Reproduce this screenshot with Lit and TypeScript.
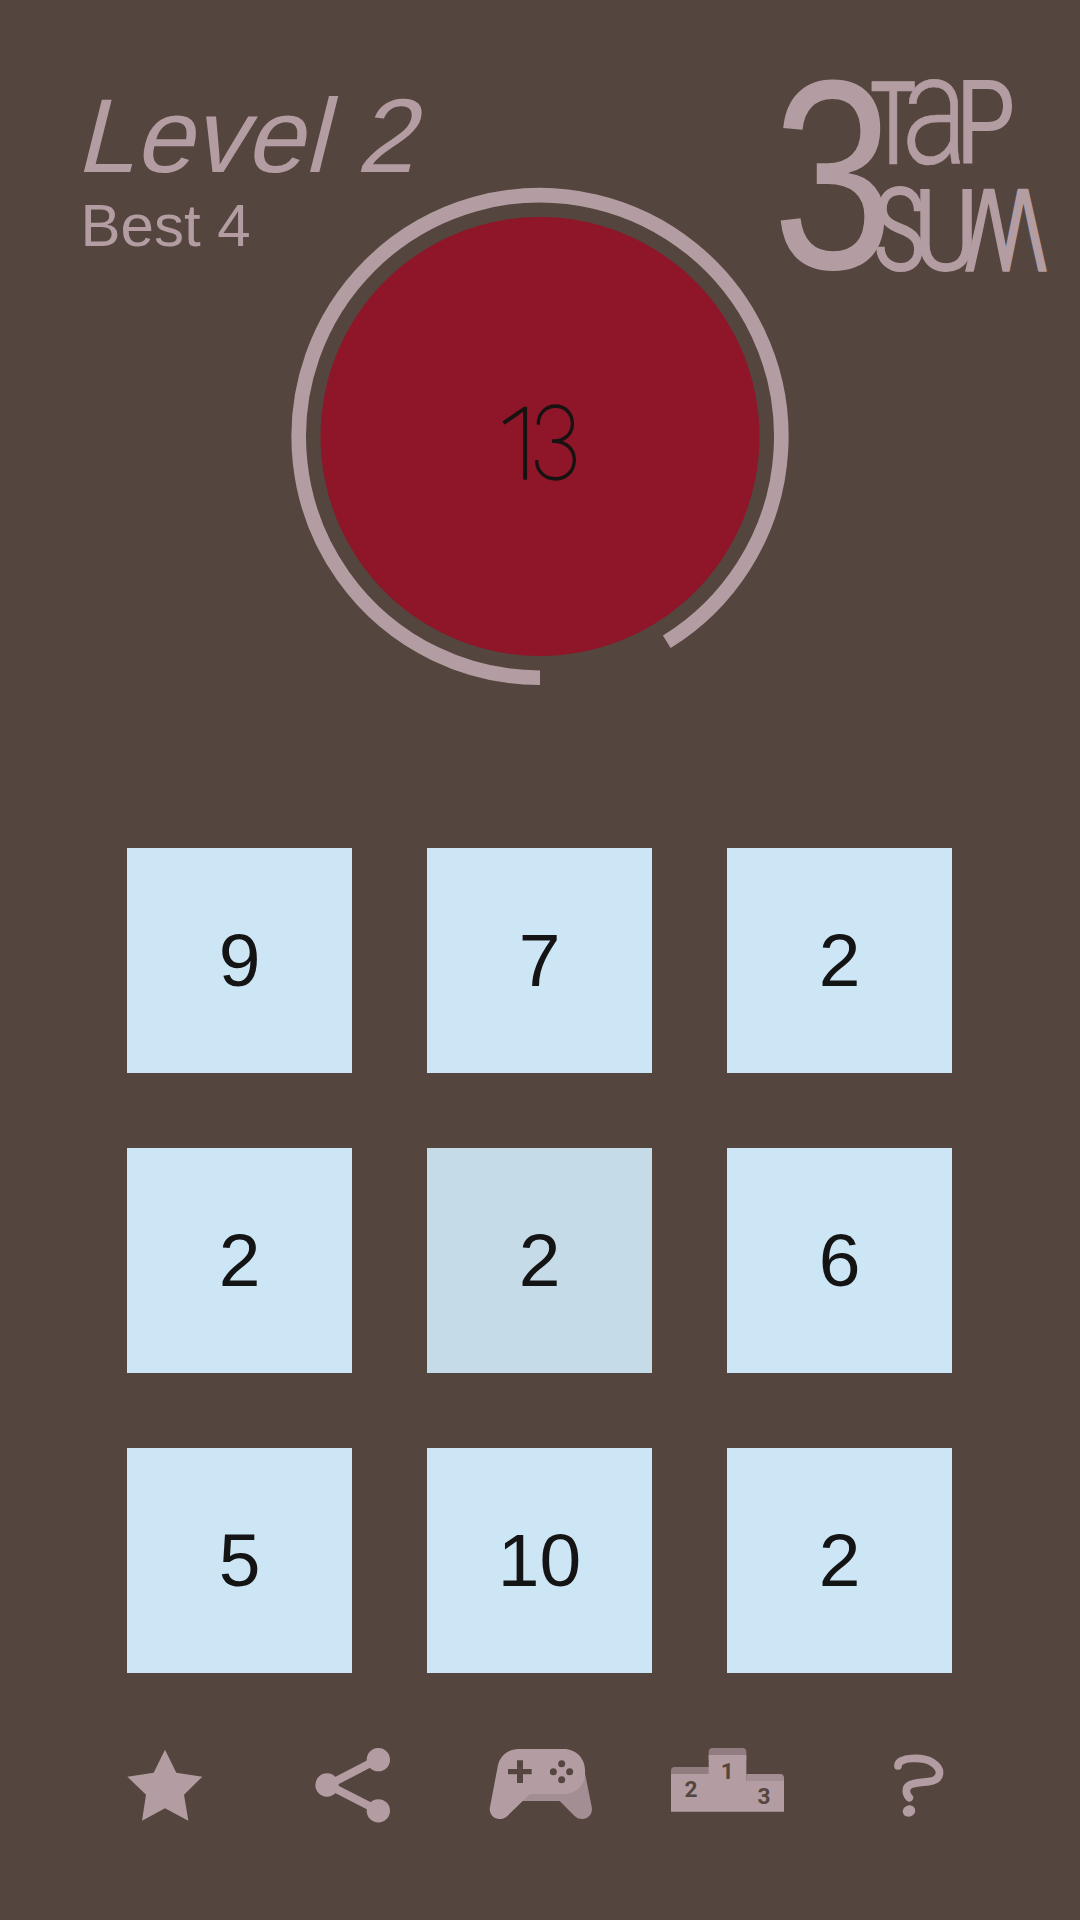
import { LitElement, html, svg, css } from "lit";
import { customElement, property, state } from "lit/decorators.js";

interface Letter {
  char: string;
  font: string;
  weight: number;
  x: number;
  y: number;
  w: number;
  h: number;
  /** Thickens the strokes by this many pixels. */
  embolden?: number;
  /** Leans both halves towards the middle by this many pixels at the top. */
  splay?: number;
}

/** Scales single characters so that their ink fills the given boxes. */
@customElement("fitted-text")
export class FittedText extends LitElement {
  static styles = css`
    :host {
      display: block;
    }
    .art {
      display: block;
      width: 100%;
      height: 100%;
      overflow: visible;
      fill: currentColor;
      stroke: currentColor;
      stroke-linejoin: round;
    }
    .glyph {
      vector-effect: non-scaling-stroke;
    }
  `;

  @property({ attribute: false }) letters: Letter[] = [];
  @property() box = "0 0 100 100";

  private transformFor(l: Letter) {
    const ctx = document.createElement("canvas").getContext("2d")!;
    ctx.font = `${l.weight} 200px ${l.font}`;
    const m = ctx.measureText(l.char);
    const inkW = m.actualBoundingBoxRight + m.actualBoundingBoxLeft;
    const inkH = m.actualBoundingBoxAscent + m.actualBoundingBoxDescent;
    const sx = l.w / inkW;
    const sy = l.h / inkH;
    const tx = l.x + m.actualBoundingBoxLeft * sx;
    const ty = l.y + m.actualBoundingBoxAscent * sy;
    return `matrix(${sx} 0 0 ${sy} ${tx} ${ty})`;
  }

  private glyph(l: Letter) {
    return svg`<text class="glyph" transform=${this.transformFor(l)} font-family=${l.font}
      font-weight=${l.weight} font-size="200" stroke-width=${l.embolden ?? 0}>${l.char}</text>`;
  }

  private splayed(l: Letter) {
    const k = l.splay! / l.h;
    const mid = l.x + l.w / 2;
    const base = l.y + l.h;
    return svg`
      <defs>
        <clipPath id="left"><rect x=${l.x - 5} y=${l.y - 5} width=${l.w / 2 + 5.2} height=${l.h + 10} /></clipPath>
        <g id="whole">${this.glyph(l)}</g>
        <g id="half" transform="matrix(1 0 ${-k} 1 ${k * base} 0)">
          <g clip-path="url(#left)"><use href="#whole" /></g>
        </g>
      </defs>
      <use href="#half" />
      <use href="#half" transform="matrix(-1 0 0 1 ${2 * mid} 0)" />`;
  }

  render() {
    return html`<svg class="art" viewBox=${this.box}>
      ${this.letters.map((l) => (l.splay ? this.splayed(l) : this.glyph(l)))}
    </svg>`;
  }
}

const LOGO: Letter[] = [
  { char: "3", font: "Liberation Sans", weight: 400, x: 20, y: 19, w: 105, h: 192 },
  { char: "T", font: "Lato", weight: 400, x: 112, y: 21, w: 43, h: 83, embolden: 0.6 },
  { char: "a", font: "Roboto", weight: 300, x: 147, y: 19, w: 53, h: 86, embolden: 0.6 },
  { char: "P", font: "Roboto", weight: 400, x: 203, y: 20, w: 49, h: 84 },
  { char: "S", font: "Roboto", weight: 400, x: 116, y: 126, w: 47, h: 86 },
  { char: "U", font: "Roboto", weight: 400, x: 160, y: 128, w: 52, h: 84 },
  { char: "M", font: "Roboto", weight: 300, x: 206, y: 128.5, w: 80, h: 82, splay: 18.5, embolden: 1.6 },
];

const TARGET: Letter[] = [
  { char: "1", font: "Noto Sans", weight: 100, x: 43, y: 36, w: 23.5, h: 72.5, embolden: 1.3 },
  { char: "3", font: "Inter", weight: 100, x: 75.5, y: 34.5, w: 40, h: 75, embolden: 1.3 },
];

@customElement("game-tile")
export class GameTile extends LitElement {
  static styles = css`
    :host {
      display: flex;
      align-items: center;
      justify-content: center;
      background: #cde6f5;
      color: #141414;
      font: 75px/1 "Liberation Sans", Arial, sans-serif;
    }
    :host([pressed]) {
      background: #c5dbe8;
    }
  `;
  @property({ type: Number }) value = 0;
  @property({ type: Boolean, reflect: true }) pressed = false;
  render() {
    return html`<span>${this.value}</span>`;
  }
}

@customElement("app-root")
export class AppRoot extends LitElement {
  static styles = css`
    :host {
      display: grid;
      grid-template-columns: 1080px;
      grid-template-rows: 848px 825px 1fr;
      height: 1920px;
      background: #54463e;
      color: #b39da2;
      font-family: "Liberation Sans", Arial, sans-serif;
      overflow: hidden;
    }
    .header,
    .dial {
      grid-area: 1 / 1;
    }
    .header {
      display: flex;
      justify-content: space-between;
      align-items: flex-start;
      padding: 60px 20px 0 80px;
    }
    .level {
      margin: 16px 0 0 -5px;
      font-size: 105px;
      font-weight: 400;
      line-height: 120px;
      transform: skewX(-14deg);
      transform-origin: 0 97px;
    }
    .best {
      margin: -4px 0 0 0.5px;
      font-size: 60px;
      line-height: 68px;
    }
    .logo {
      width: 300px;
      height: 230px;
    }
    .dial {
      display: grid;
      justify-content: center;
      align-content: start;
      padding-top: 187px;
    }
    .ring,
    .target {
      grid-area: 1 / 1;
    }
    .ring {
      width: 500px;
      height: 500px;
    }
    .track {
      fill: none;
      stroke: #b39da2;
      stroke-width: 14.6;
    }
    .disc {
      fill: #8e1628;
    }
    .target {
      width: 160px;
      height: 140px;
      margin: 183px 0 0 170px;
      color: #181312;
    }
    .board {
      display: grid;
      grid-template-columns: repeat(3, 225px);
      grid-template-rows: repeat(3, 225px);
      gap: 75px;
      padding-left: 127px;
    }
    .menu {
      display: grid;
      grid-template-columns: repeat(5, 188px);
      align-content: start;
      padding: 57px 0 0 70px;
    }
    .icon {
      display: block;
      width: 188px;
      height: 110px;
      fill: #b39da2;
    }
    .line {
      fill: none;
      stroke: #b39da2;
    }
    .shade {
      fill: #a38e94;
    }
    .deep {
      fill: #917d80;
    }
    .cut {
      fill: #54463e;
    }
    .rank {
      fill: #54463e;
      font: 700 68px Roboto, sans-serif;
      text-anchor: middle;
    }
  `;

  @state() private level = 2;
  @state() private best = 4;
  @state() private tiles = [9, 7, 2, 2, 2, 6, 5, 10, 2];
  @state() private pressed = 4;
  @state() private elapsed = 31.7;

  private arc() {
    const r = 241.3;
    const a = (this.elapsed * Math.PI) / 180;
    const x = 250 + r * Math.sin(a);
    const y = 249.5 + r * Math.cos(a);
    return `M250 ${249.5 + r}A${r} ${r} 0 1 1 ${x} ${y}`;
  }

  render() {
    return html`
      <header class="header">
        <div>
          <h1 class="level">Level ${this.level}</h1>
          <p class="best">Best ${this.best}</p>
        </div>
        <fitted-text class="logo" box="0 0 300 230" .letters=${LOGO}></fitted-text>
      </header>
      <section class="dial">
        <svg class="ring" viewBox="0 0 500 500">
          <circle class="disc" cx="250" cy="249.5" r="219.5" />
          <path class="track" d=${this.arc()} />
        </svg>
        <fitted-text class="target" box="0 0 160 140" .letters=${TARGET}></fitted-text>
      </section>
      <main class="board">
        ${this.tiles.map(
          (v, i) => html`<game-tile .value=${v} ?pressed=${i === this.pressed}></game-tile>`
        )}
      </main>
      <nav class="menu">
        <svg class="icon" viewBox="-120 0 564 330">
          <path d="M165 59L199 128L277 140L222 194L235 272L165 235L96 272L108 194L52 140L131 128Z" />
        </svg>
        <svg class="icon" viewBox="444 0 564 330">
          <circle cx="651" cy="165" r="35" />
          <circle cx="805" cy="89" r="35" />
          <circle cx="805" cy="242.5" r="35" />
          <path class="line" stroke-width="24" d="M805 87L655 165L805 242" />
        </svg>
        <svg class="icon" viewBox="-72 0 564 330">
          <path
            class="shade"
            d="M340 105L365 230C370 252 354 267 337 267C327 267 319 263 313 257L269 213H158L165 170Z"
          />
          <path
            d="M146 57H282C317 57 345 85 345 120V132C345 166 317 192 282 192H180L113 257C106 264 97 267 89 267C70 267 56 251 60 231L84 105C91 76 117 57 146 57Z"
          />
          <path class="cut" d="M141 91H159V117H185V133H159V159H141V133H114V117H141Z" />
          <circle class="cut" cx="275" cy="101" r="10.5" />
          <circle class="cut" cx="250" cy="125" r="10.5" />
          <circle class="cut" cx="299" cy="125" r="10.5" />
          <circle class="cut" cx="275" cy="149" r="10.5" />
        </svg>
        <svg class="icon" viewBox="492 0 564 330">
          <path class="deep" d="M603 140V122Q603 111 614 111H717V140Z" />
          <path class="deep" d="M716 90V66Q716 54 728 54H817Q829 54 829 66V90Z" />
          <path class="shade" d="M829 160V132H930Q942 132 942 144V160Z" />
          <path d="M603 132H716V75H829V153H942V245H603Z" />
          <text class="rank" x="663" y="202">2</text>
          <text class="rank" x="772" y="146">1</text>
          <text class="rank" x="882" y="222">3</text>
        </svg>
        <svg class="icon" viewBox="-114 0 564 330">
          <path
            class="line"
            stroke-width="23"
            stroke-linecap="round"
            d="M114 108C112 80 190 80 216 97C252 120 242 151 206 155C172 159 132 157 140 190C142 197 145 200 148 203"
          />
          <ellipse cx="147" cy="243" rx="19" ry="17" transform="rotate(-20 147 243)" />
        </svg>
      </nav>
    `;
  }
}
